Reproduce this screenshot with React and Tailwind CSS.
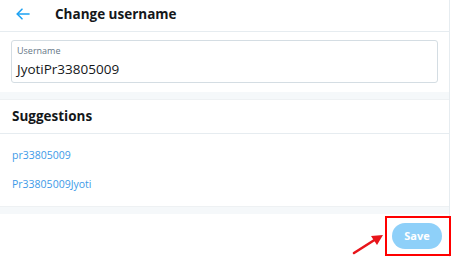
import React from 'react';

const suggestions = ['pr33805009', 'Pr33805009Jyoti'];

const App = () => {
  return (
    <div className="relative w-[451px] h-[257px] overflow-hidden bg-white font-['Open_Sans',sans-serif]">
      <div className="w-[450px] h-full border-r border-[#e6ecf0] flex flex-col">
        {/* Header */}
        <div className="h-[32px] shrink-0 flex items-center border-b border-[#e6ecf0]">
          <div className="w-[55px] flex items-center pl-[16px] pb-[3px]">
            <svg width="14" height="12" viewBox="0 0 14 12" fill="none" stroke="#1da1f2" strokeWidth="1.6" strokeLinecap="round" strokeLinejoin="round">
              <path d="M13 6H1.5" />
              <path d="M6 1.2L1.2 6L6 10.8" />
            </svg>
          </div>
          <h1 className="text-[13.5px] font-bold text-[#14171a] leading-none pb-[1px]">Change username</h1>
        </div>

        {/* Username input */}
        <div className="px-[11px] pt-[8px] pb-[9px]">
          <div className="h-[43px] border border-[#d4dde3] rounded-[3px] px-[5px] pt-[4px]">
            <div className="text-[9px] leading-[12px] text-[#657786]">Username</div>
            <div className="text-[13.5px] leading-[18px] text-[#14171a] mt-[3px]">JyotiPr33805009</div>
          </div>
        </div>

        <div className="h-[8px] shrink-0 bg-[#f5f8fa] border-b border-[#eef1f3]" />

        {/* Suggestions */}
        <div className="h-[34px] shrink-0 flex items-center px-[12px] border-b border-[#e6ecf0]">
          <h2 className="text-[13.5px] font-bold text-[#14171a] leading-none">Suggestions</h2>
        </div>
        <div className="py-[7px]">
          {suggestions.map((s) => (
            <div key={s} className="h-[29px] flex items-center px-[12px] text-[10.5px] text-[#3d9ae8]">
              {s}
            </div>
          ))}
        </div>

        <div className="h-[8px] shrink-0 bg-[#f5f8fa] border-t border-[#eef1f3]" />

        {/* Footer */}
        <div className="flex justify-end pt-[9px] pr-[7px]">
          <button className="w-[50px] h-[26px] rounded-full bg-[#8ed0f9] text-white text-[11px] font-bold">
            Save
          </button>
        </div>
      </div>

      {/* Annotation */}
      <div className="absolute left-[385px] top-[216px] w-[66px] h-[40px] border-[2.5px] border-[#ff0000]" />
      <svg className="absolute left-[350px] top-[230px]" width="36" height="28" viewBox="0 0 36 28">
        <path d="M4 23L26 9" stroke="#e8141a" strokeWidth="2.6" strokeLinecap="round" />
        <path d="M33 5L21 6L27 15Z" fill="#e8141a" />
      </svg>
    </div>
  );
};

export default App;
